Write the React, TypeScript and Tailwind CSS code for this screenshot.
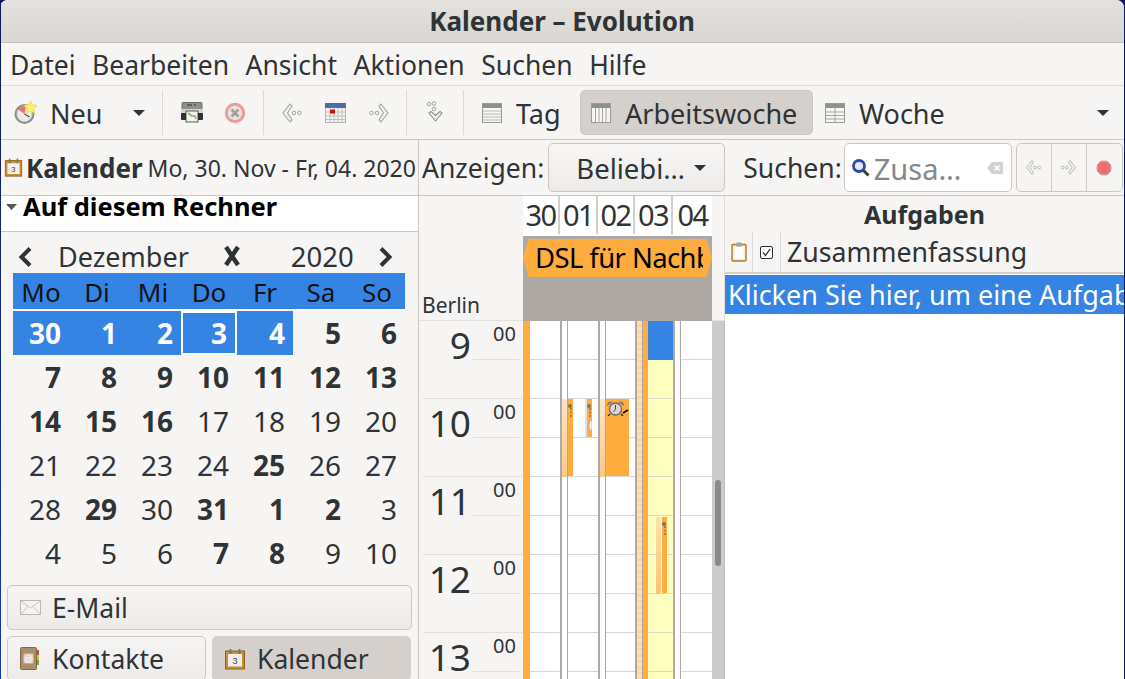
const MENU = ["Datei", "Bearbeiten", "Ansicht", "Aktionen", "Suchen", "Hilfe"];
const WEEKDAYS = ["Mo", "Di", "Mi", "Do", "Fr", "Sa", "So"];

// [day, bold]
const WEEKS: [number, boolean][][] = [
  [[30, true], [1, true], [2, true], [3, true], [4, true], [5, true], [6, true]],
  [[7, true], [8, true], [9, true], [10, true], [11, true], [12, true], [13, true]],
  [[14, true], [15, true], [16, true], [17, false], [18, false], [19, false], [20, false]],
  [[21, false], [22, false], [23, false], [24, false], [25, true], [26, false], [27, false]],
  [[28, false], [29, true], [30, false], [31, true], [1, true], [2, true], [3, false]],
  [[4, false], [5, false], [6, false], [7, true], [8, true], [9, false], [10, false]],
];

const HOURS = [9, 10, 11, 12, 13];

function ToolSep() {
  return <div className="w-px h-[45px] bg-[#dedbd8] shrink-0" />;
}

function Caret({ className = "" }: { className?: string }) {
  return (
    <svg width="14" height="8" viewBox="0 0 14 8" className={className}>
      <path d="M1 1h12L7 7z" fill="#2e3436" />
    </svg>
  );
}

function NewIcon() {
  return (
    <svg width="24" height="24" viewBox="0 0 24 24">
      <circle cx="10.500" cy="13" r="10" fill="#8f8f8a" />
      <circle cx="10.500" cy="13" r="7.500" fill="#ecebe8" stroke="#d8d7d3" />
      <path d="M10.500 13L4 8.500A7.500 7.500 0 0 1 12 5.500z" fill="#e2786c" />
      <path d="M10.500 13l5 3" stroke="#555" strokeWidth="1.400" />
      <path d="M16.500 0l2 3.800 4.500.7-3.200 3.200.8 4.500-4.100-2.200-4.100 2.200.8-4.500L10 4.500l4.500-.7z" fill="#fdf06a" stroke="#e9cf4f" strokeWidth=".7" />
    </svg>
  );
}

function PrintIcon() {
  return (
    <svg width="24" height="21" viewBox="0 0 24 21">
      <rect x="2" y="0.500" width="20" height="7" rx="1" fill="#8d908b" stroke="#555" strokeWidth=".8" />
      <path d="M7 3h5M14 3h2" stroke="#333" />
      <rect x="1" y="7" width="22" height="5" fill="#d5d6d3" />
      <rect x="1" y="11" width="22" height="7" rx="1" fill="#2f3231" />
      <rect x="6" y="9" width="12" height="11" fill="#f2f3ee" stroke="#333" strokeWidth=".8" />
      <path d="M8 11l4 3 3 0 1 3" stroke="#84b56d" strokeWidth="1.600" fill="none" />
    </svg>
  );
}

function StopIcon() {
  return (
    <svg width="22" height="22" viewBox="0 0 22 22">
      <circle cx="11" cy="11" r="8.700" fill="#e6e4e1" stroke="#eb9c9c" strokeWidth="3" />
      <path d="M7.500 7.500l7 7m0-7l-7 7" stroke="#a3a09c" strokeWidth="2.600" />
    </svg>
  );
}

function BackIcon({ size = 22 }: { size?: number }) {
  return (
    <svg width={size} height={size} viewBox="0 0 22 22" fill="none">
      <path d="M9 2L2 11l7 9 2-2-4.500-7L11 4z" fill="#f4f3f1" stroke="#a5a5a0" strokeWidth="1.100" />
      <circle cx="13" cy="11" r="1.800" stroke="#a5a5a0" />
      <circle cx="18.500" cy="11" r="1.800" stroke="#a5a5a0" />
    </svg>
  );
}

function ForwardIcon({ size = 22 }: { size?: number }) {
  return (
    <svg width={size} height={size} viewBox="0 0 22 22" fill="none">
      <path d="M13 2l7 9-7 9-2-2 4.500-7L11 4z" fill="#f4f3f1" stroke="#a5a5a0" strokeWidth="1.100" />
      <circle cx="9" cy="11" r="1.800" stroke="#a5a5a0" />
      <circle cx="3.500" cy="11" r="1.800" stroke="#a5a5a0" />
    </svg>
  );
}

function JumpIcon() {
  return (
    <svg width="20" height="24" viewBox="0 0 20 24" fill="none">
      <circle cx="4" cy="3" r="1.800" stroke="#a5a5a0" />
      <circle cx="9" cy="2.500" r="1.800" stroke="#a5a5a0" />
      <circle cx="9" cy="8" r="1.800" stroke="#a5a5a0" />
      <path d="M4 12l2-1.500 4.500 4 4.500-4L17 12l-6.500 8z" fill="#f4f3f1" stroke="#8f8f8a" strokeWidth="1.100" />
    </svg>
  );
}

function MonthIcon() {
  return (
    <svg width="21" height="20" viewBox="0 0 21 20">
      <rect x=".5" y=".5" width="20" height="19" fill="#f4f3f0" stroke="#b5b5b0" />
      <rect x="0" y="0" width="21" height="5" fill="#4a6fa8" />
      <path d="M1 9h19M1 13h19M1 16.500h19M5 5v14M9 5v14M13 5v14M17 5v14" stroke="#c2c0bc" />
      <rect x="5" y="6.500" width="5" height="4" fill="#c81010" />
    </svg>
  );
}

function ViewIcon({ kind }: { kind: "day" | "workweek" | "week" }) {
  return (
    <svg width="20" height="20" viewBox="0 0 20 20">
      <rect x=".5" y=".5" width="19" height="19" fill="#f7f6f3" stroke="#9a9a96" />
      <rect x="1" y="1" width="18" height="4" fill="#8f918c" />
      {kind === "day" && <path d="M1 8h18M1 11h18M1 14h18M1 17h18" stroke="#b4c0a8" />}
      {kind === "workweek" && <path d="M4.500 5v14M8 5v14M11.500 5v14M15 5v14" stroke="#a5a5a0" />}
      {kind === "week" && <path d="M10 5v14M1 9h18M1 12.500h18M1 16h18" stroke="#a5a5a0" />}
    </svg>
  );
}

function CalendarIcon({ size = 22 }: { size?: number }) {
  return (
    <svg width={size} height={size} viewBox="0 0 22 22">
      <rect x="1.500" y="3" width="19" height="18" fill="#c78f33" stroke="#8a6426" />
      <rect x="4" y="6" width="14" height="12.500" fill="#f2f0ec" />
      <path d="M6.500 1v5M15.500 1v5" stroke="#77756f" strokeWidth="1.800" />
      <text x="11" y="16" textAnchor="middle" fontSize="9" fill="#444" fontFamily="'Liberation Sans', sans-serif">3</text>
    </svg>
  );
}

function MailIcon() {
  return (
    <svg width="21" height="15" viewBox="0 0 21 15">
      <rect x=".5" y=".5" width="20" height="14" fill="#f4f3f1" stroke="#b9b8b4" />
      <path d="M1 1l9.500 7L20 1M1 14l7-7.500M20 14l-7-7.500" stroke="#c4c3bf" fill="none" />
    </svg>
  );
}

function ContactsIcon() {
  return (
    <svg width="20" height="23" viewBox="0 0 20 23">
      <rect x="15" y="3" width="4" height="5" fill="#d84a3a" />
      <rect x="15" y="8" width="4" height="5" fill="#e9b93a" />
      <rect x="15" y="13" width="4" height="5" fill="#6aa84f" />
      <rect x=".5" y=".5" width="16" height="22" rx="1" fill="#a98d67" stroke="#7f6848" />
      <rect x="3.500" y="6.500" width="10" height="10" rx="1" fill="#d9d0c1" />
      <text x="8.500" y="14.500" textAnchor="middle" fontSize="9" fill="#fff" fontFamily="'Liberation Sans', sans-serif">@</text>
    </svg>
  );
}

function SearchIcon() {
  return (
    <svg width="20" height="20" viewBox="0 0 20 20" fill="none">
      <circle cx="8" cy="8" r="5.500" stroke="#2a4aa5" strokeWidth="2.800" fill="#e4ebf7" />
      <path d="M12.500 12.500l5 5" stroke="#3a3a36" strokeWidth="3" />
    </svg>
  );
}

function ClearIcon() {
  return (
    <svg width="18" height="14" viewBox="0 0 18 14">
      <path d="M6 1h11v12H6L1 7z" fill="#d3d2d0" />
      <path d="M8.500 4.500l5 5m0-5l-5 5" stroke="#fff" strokeWidth="1.600" />
    </svg>
  );
}

function TaskIcon() {
  return (
    <svg width="16" height="20" viewBox="0 0 16 20">
      <rect x="1" y="2.500" width="14" height="16.500" rx="1" fill="#f2ead6" stroke="#b07a28" strokeWidth="1.400" />
      <rect x="3.500" y="5" width="9" height="11.500" fill="#fff" />
      <rect x="5" y=".5" width="6" height="4" rx="1" fill="#a5a5a0" />
    </svg>
  );
}

function CheckIcon() {
  return (
    <svg width="13" height="13" viewBox="0 0 13 13" fill="none">
      <rect x=".5" y=".5" width="12" height="12" rx="1.500" fill="#fff" stroke="#2e3436" />
      <path d="M3 6.500l2.500 3L10 3" stroke="#2e3436" strokeWidth="1.300" />
    </svg>
  );
}

function AlarmIcon() {
  return (
    <svg width="22" height="15" viewBox="0 0 22 15">
      <path d="M0 5a4 4 0 0 1 6-4zM11 1a4 4 0 0 1 6 4z" fill="#7d7b76" />
      <circle cx="8.500" cy="8" r="6" fill="#d8d8d8" stroke="#6b6b6b" strokeWidth="1.300" />
      <path d="M8.500 8V4" stroke="#444" />
      <path d="M8.500 8l-2 3" stroke="#d0574a" strokeWidth="1.300" />
      <path d="M3 13l-2 2M14 13l2 2" stroke="#222" strokeWidth="1.300" />
      <path d="M16 12l5-3" stroke="#111" strokeWidth="2" />
    </svg>
  );
}

function ReminderSliver({ bell = false }: { bell?: boolean }) {
  return (
    <svg width="5" height="36" viewBox="0 0 5 36" className="absolute left-0 top-[2px]">
      <circle cx="2" cy="5" r="2" fill="#77756f" />
      <path d="M3 7v9" stroke="#555" strokeDasharray="2 1.500" />
      {bell && <path d="M5 19a3 5.500 0 0 0 0 11z" fill="#f5f5f5" stroke="#888" strokeWidth=".5" />}
    </svg>
  );
}

function GridRows({ yellow = false }: { yellow?: boolean }) {
  return (
    <div className={`flex flex-col ${yellow ? "bg-[#ffffbf]" : "bg-white"}`}>
      {Array.from({ length: 10 }).map((_, i) => (
        <div key={i} className={`h-[39px] shrink-0 border-b ${yellow ? "border-[#dcdccc]" : "border-[#d8d8d6]"} ${yellow && i === 0 ? "bg-[#3584e4] border-b-[#3584e4]" : ""}`} />
      ))}
    </div>
  );
}

function MiniCalendar() {
  return (
    <div className="px-[13px] pt-[9px]">
      <div className="flex items-center h-[32px] text-[27px] text-[#2e3436]">
        <svg width="16" height="22" viewBox="0 0 16 22" fill="none" className="ml-[4px] shrink-0">
          <path d="M13 2.500L4.500 11l8.500 8.500" stroke="#2e3436" strokeWidth="4" />
        </svg>
        <span className="ml-[25px]">Dezember</span>
        <svg width="20" height="24" viewBox="0 0 20 24" className="ml-[33px] shrink-0 -mt-[2px]" fill="none">
          <path d="M4 3l12 18M16 3L4 21" stroke="#2e3436" strokeWidth="4.500" />
        </svg>
        <span className="ml-[49px] text-[27.500px]">2020</span>
        <svg width="16" height="22" viewBox="0 0 16 22" fill="none" className="ml-[24px] shrink-0">
          <path d="M3 2.500l8.500 8.500L3 19.500" stroke="#2e3436" strokeWidth="4" />
        </svg>
      </div>
      <div className="grid grid-cols-7 h-[36px] bg-[#3584e4] text-[#101418] text-[26px] leading-[38px]">
        {WEEKDAYS.map((d) => (
          <div key={d} className="text-center">{d}</div>
        ))}
      </div>
      <div className="h-[2px] bg-white" />
      {WEEKS.map((week, w) => (
        <div key={w} className="grid grid-cols-7 h-[44px] text-[28px] leading-[40px] text-[#2e3436]">
          {week.map(([day, bold], d) => {
            const selected = w === 0 && d < 5;
            const today = w === 0 && d === 3;
            return (
              <div
                key={d}
                className={`text-right pr-[8px] ${bold ? "font-bold" : ""} ${selected ? "bg-[#3584e4] text-white" : ""} ${today ? "border-2 border-white pr-[6px]" : "pt-[2px]"}`}
              >
                {day}
              </div>
            );
          })}
        </div>
      ))}
    </div>
  );
}

function SwitcherButton({ icon, label, active = false, className = "" }: { icon: React.ReactNode; label: string; active?: boolean; className?: string }) {
  return (
    <div
      className={`flex items-center h-[45px] rounded-[5px] border text-[26.500px] text-[#2e3436] ${
        active ? "bg-[#d5d0cc] border-[#d5d0cc]" : "bg-gradient-to-b from-[#f6f5f4] to-[#edebe9] border-[#cdc7c2]"
      } ${className}`}
    >
      <div className="w-[44px] flex justify-center shrink-0">{icon}</div>
      <span className="pt-[2px]">{label}</span>
    </div>
  );
}

export default function App() {
  return (
    <div className="relative w-[1125px] h-[679px] overflow-hidden bg-[#0b1b57] pr-px" style={{ fontFamily: "'Noto Sans', sans-serif" }}>
      <div className="h-full flex flex-col rounded-t-[8px] overflow-hidden bg-[#f6f5f4] text-[#2e3436]">
        {/* title bar */}
        <div className="h-[43px] shrink-0 flex items-center justify-center pt-[1px] bg-gradient-to-b from-[#e4e1de] to-[#dad6d2] border-b border-[#c4bfba] text-[26px] font-bold text-[#2e3436]">
          Kalender – Evolution
        </div>

        {/* menu bar */}
        <div className="h-[43px] shrink-0 flex items-center gap-[16.500px] pl-[10px] pt-[4px] border-b border-[#dedbd8] text-[26.500px]">
          {MENU.map((m) => (
            <span key={m}>{m}</span>
          ))}
        </div>

        {/* toolbar */}
        <div className="h-[54px] shrink-0 flex items-center border-b border-[#cdc7c2] text-[27px]">
          <div className="w-[162px] flex items-center shrink-0">
            <div className="ml-[14px]"><NewIcon /></div>
            <span className="ml-[12px] pt-[4px]">Neu</span>
            <Caret className="ml-[30px]" />
          </div>
          <ToolSep />
          <div className="w-[100px] flex items-center shrink-0 pl-[17px] gap-[20px]">
            <PrintIcon />
            <StopIcon />
          </div>
          <ToolSep />
          <div className="w-[142px] flex items-center shrink-0 pl-[17px] gap-[22px]">
            <BackIcon />
            <MonthIcon />
            <ForwardIcon />
          </div>
          <ToolSep />
          <div className="w-[56px] flex justify-center shrink-0"><JumpIcon /></div>
          <ToolSep />
          <div className="w-[116px] flex items-center shrink-0 pl-[18px] gap-[14px]">
            <ViewIcon kind="day" />
            <span className="pt-[4px]">Tag</span>
          </div>
          <div className="w-[233px] h-[45px] flex items-center shrink-0 pl-[10px] gap-[14px] rounded-[5px] bg-[#d5d0cc] border border-[#cdc7c2]">
            <ViewIcon kind="workweek" />
            <span className="pt-[4px]">Arbeitswoche</span>
          </div>
          <div className="flex items-center pl-[12px] gap-[14px]">
            <ViewIcon kind="week" />
            <span className="pt-[4px]">Woche</span>
          </div>
          <Caret className="ml-auto mr-[14px]" />
        </div>

        <div className="flex-1 flex min-h-0">
          {/* sidebar */}
          <div className="w-[419px] shrink-0 flex flex-col border-r border-[#cdc7c2]">
            <div className="h-[56px] shrink-0 flex items-center border-b border-[#cdc7c2] pl-[4px] whitespace-nowrap">
              <CalendarIcon size={19} />
              <span className="ml-[3px] pt-[2px] text-[26px] font-bold">Kalender</span>
              <span className="ml-[5px] pt-[2px] text-[23px]">Mo, 30. Nov - Fr, 04. 2020</span>
            </div>
            <div className="h-[36px] shrink-0 flex items-start bg-white border-b border-[#cdc7c2] text-black text-[25.500px] font-bold leading-[21px] pl-[5px]">
              <svg width="13" height="7" viewBox="0 0 13 7" className="mt-[8px]"><path d="M1 0h11L6.500 6z" fill="#555753" /></svg>
              <span className="ml-[5px]">Auf diesem Rechner</span>
            </div>
            <MiniCalendar />
            <div className="flex flex-col gap-[6px] px-[7px] pt-[10px]">
              <SwitcherButton icon={<MailIcon />} label="E-Mail" className="w-[405px]" />
              <div className="flex gap-[6px]">
                <SwitcherButton icon={<ContactsIcon />} label="Kontakte" className="w-[199px]" />
                <SwitcherButton icon={<CalendarIcon />} label="Kalender" active className="w-[199px]" />
              </div>
            </div>
          </div>

          {/* main area */}
          <div className="flex-1 flex flex-col min-w-0">
            <div className="h-[56px] shrink-0 flex items-center border-b border-[#cdc7c2] text-[26.500px] pl-[3px] whitespace-nowrap">
              <span className="pt-[2px]">Anzeigen:</span>
              <div className="ml-[4px] w-[177px] h-[49px] shrink-0 flex items-center rounded-[5px] border border-[#cdc7c2] bg-gradient-to-b from-[#f8f7f6] to-[#edebe9] pl-[27px]">
                <span className="pt-[2px] text-[27.500px]">Beliebi…</span>
                <Caret className="ml-[8px]" />
              </div>
              <span className="ml-[18px] pt-[2px]">Suchen:</span>
              <div className="ml-[2px] w-[168px] h-[49px] shrink-0 flex items-center rounded-[5px] border border-[#cdc7c2] bg-white pl-[6px]">
                <SearchIcon />
                <span className="ml-[3px] pt-[2px] text-[29px] text-[#84888a]">Zusa…</span>
                <div className="ml-auto mr-[7px]"><ClearIcon /></div>
              </div>
              <div className="ml-[4px] w-[107px] h-[49px] shrink-0 grid grid-cols-3 rounded-[5px] border border-[#cdc7c2] divide-x divide-[#cdc7c2]">
                <div className="flex items-center justify-center opacity-90"><BackIcon size={17} /></div>
                <div className="flex items-center justify-center opacity-90"><ForwardIcon size={17} /></div>
                <div className="flex items-center justify-center">
                  <svg width="16" height="16" viewBox="0 0 16 16">
                    <path d="M5 1h6l4 4v6l-4 4H5l-4-4V5z" fill="#ee6f73" stroke="#bdbab5" />
                  </svg>
                </div>
              </div>
            </div>

            <div className="flex-1 flex min-h-0">
              {/* day view */}
              <div className="w-[306px] shrink-0 flex flex-col min-h-0">
                <div className="h-[125px] shrink-0 flex">
                  <div className="w-[104px] shrink-0 flex items-end pl-[3px] pb-[2px] text-[21px] leading-[28px]">Berlin</div>
                  <div className="w-[189px] shrink-0 flex flex-col bg-[#aea9a4] relative">
                    <div className="h-[37px] shrink-0 grid grid-cols-[37px_38px_37px_38px_39px] bg-white text-[29px] tracking-[-1.500px] leading-[38px] pb-[3px] box-content">
                      {["30", "01", "02", "03", "04"].map((d, i) => (
                        <div key={d} className={`text-center ${i < 4 ? "border-r-2 border-[#d3d0cc]" : ""}`}>{d}</div>
                      ))}
                    </div>
                    <div className="absolute left-0 top-[43px] w-[189px] h-[38px] bg-[#ffad3f] text-black text-[27.500px] tracking-[-0.600px] leading-[38px] pl-[12px] pr-[9px] [clip-path:polygon(3%_0,97%_0,100%_50%,97%_100%,3%_100%,0_50%)]">
                      <div className="overflow-hidden whitespace-nowrap">DSL für Nachbarn</div>
                    </div>
                  </div>
                  <div className="flex-1 bg-[#f6f5f4]" />
                </div>
                <div className="flex-1 flex min-h-0 overflow-hidden border-t border-[#e4e2df] -mt-px">
                  {/* time column */}
                  <div className="w-[104px] shrink-0 flex flex-col">
                    {HOURS.map((h) => (
                      <div key={h} className="h-[78px] shrink-0 relative flex pr-[6px] border-b border-[#e2e0dd] ml-[4px]">
                        <span className="w-[48px] text-right text-[37px] leading-[48px] text-[#2e3436]">{h}</span>
                        <span className="ml-[22px] text-[20px] leading-[26px]">00</span>
                        <div className="absolute left-[50px] right-[4px] top-[38px] border-b border-[#e2e0dd]" />
                      </div>
                    ))}
                  </div>
                  {/* day columns */}
                  <div className="w-[189px] shrink-0 flex bg-[#aea9a4]">
                    <div className="w-[37px] shrink-0 flex">
                      <div className="w-[7px] bg-[#ffad3f]" />
                      <div className="flex-1"><GridRows /></div>
                    </div>
                    <div className="w-[38px] shrink-0 flex pl-[2px]">
                      <div className="w-[5px] bg-white shrink-0 relative">
                        <div className="absolute left-0 top-[78px] w-[5px] h-[78px] bg-gradient-to-b from-[#fde6c8] to-[#fcc98a]" />
                      </div>
                      <div className="w-px bg-[#aea9a4] shrink-0" />
                      <div className="flex-1 relative">
                        <GridRows />
                        <div className="absolute left-0 top-[78px] w-[5px] h-[77px] bg-[#ffad3f]" />
                        <div className="absolute left-[5px] top-[78px] w-[14px] h-[38px] bg-white" />
                        <div className="absolute left-[17px] top-[78px] w-[2px] h-[38px] bg-[#e2e2e2]" />
                        <div className="absolute left-0 top-[78px] w-[5px] h-[38px] overflow-hidden"><ReminderSliver /></div>
                        <div className="absolute left-[19px] top-[78px] w-[5px] h-[38px] bg-[#ffad3f]"><ReminderSliver bell /></div>
                      </div>
                    </div>
                    <div className="w-[37px] shrink-0 flex pl-[2px]">
                      <div className="w-[5px] bg-white shrink-0 relative">
                        <div className="absolute left-0 top-[78px] w-[5px] h-[78px] bg-gradient-to-b from-[#fde6c8] to-[#fcc98a]" />
                      </div>
                      <div className="w-px bg-[#aea9a4] shrink-0" />
                      <div className="flex-1 relative">
                        <GridRows />
                        <div className="absolute left-0 top-[78px] w-[23px] h-[77px] bg-[#ffad3f] overflow-hidden">
                          <div className="pt-[2px] pl-[1px]"><AlarmIcon /></div>
                        </div>
                      </div>
                    </div>
                    <div className="w-[38px] shrink-0 flex pl-[2px]">
                      <div className="w-[5px] shrink-0 bg-[repeating-linear-gradient(#fde0b8_0px,#fde0b8_3px,#fcd59f_3px,#fcd59f_6px)]" />
                      <div className="w-px bg-[#aea9a4] shrink-0" />
                      <div className="w-[5px] bg-[#ffad3f] shrink-0" />
                      <div className="flex-1 relative">
                        <GridRows yellow />
                        <div className="absolute left-[8px] top-[196px] w-[5px] h-[77px] bg-gradient-to-b from-[#fee3a8] to-[#fdc170]" />
                        <div className="absolute left-[14px] top-[196px] w-[5px] h-[76px] bg-[#ffad3f]"><ReminderSliver /></div>
                      </div>
                    </div>
                    <div className="w-[39px] shrink-0 flex pl-[2px]">
                      <div className="w-[5px] bg-white shrink-0" />
                      <div className="w-px bg-[#aea9a4] shrink-0" />
                      <div className="flex-1"><GridRows /></div>
                    </div>
                  </div>
                  {/* scrollbar */}
                  <div className="flex-1 bg-[#cbcbcb] relative border-r border-[#bfbcb8]">
                    <div className="absolute left-[3px] top-[159px] w-[6px] h-[86px] rounded-full bg-[#898b8b]" />
                  </div>
                </div>
              </div>

              {/* tasks */}
              <div className="flex-1 min-w-0 flex flex-col bg-white border-l border-[#e0dedb] -ml-px">
                <div className="h-[36px] shrink-0 flex items-center justify-center pt-[1px] bg-[#f6f5f4] font-bold text-[25px]">Aufgaben</div>
                <div className="h-[42px] shrink-0 flex bg-[#f6f5f4] border-b-2 border-[#d5d2ce] text-[26.700px]">
                  <div className="w-[28px] flex items-center justify-center border-r border-[#dedbd8]"><TaskIcon /></div>
                  <div className="w-[28px] flex items-center justify-center border-r border-[#dedbd8]"><CheckIcon /></div>
                  <span className="pl-[6px] self-center">Zusammenfassung</span>
                </div>
                <div className="mt-[1px] h-[39px] shrink-0 bg-[#3584e4] text-white text-[27px] leading-[39px] pl-[3px] overflow-hidden whitespace-nowrap">
                  Klicken Sie hier, um eine Aufgabe hinzuzufügen
                </div>
              </div>
            </div>
          </div>
        </div>
      </div>
      {/* wallpaper showing along the window's left edge */}
      <div className="absolute left-0 top-0 bottom-0 w-px bg-gradient-to-b from-[#0b1b57] to-[#1a3aa8]" />
    </div>
  );
}
